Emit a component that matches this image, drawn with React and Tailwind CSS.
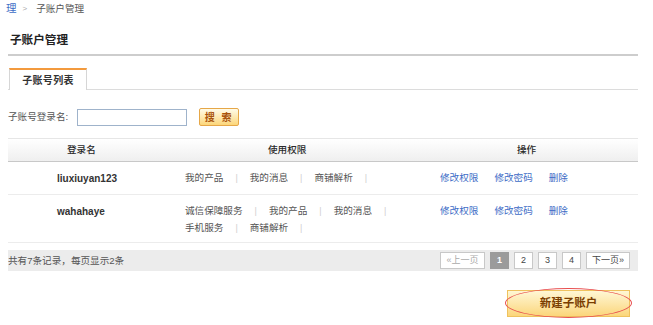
export default function App() {
  const Perm = ({ t }) => (
    <>
      <span>{t}</span>
      <span className="mx-[12px] text-[#cfcfcf] font-['Liberation_Sans'] text-[9px]">|</span>
    </>
  );
  const Actions = () => (
    <div className="flex gap-[16px] h-[17px] items-center text-[#3d6cc6]">
      <span>修改权限</span>
      <span>修改密码</span>
      <span>删除</span>
    </div>
  );
  const PageBox = ({ children, cls }) => (
    <div className={"h-[17px] border flex items-center justify-center text-[9px] " + cls}>{children}</div>
  );
  return (
    <div className="w-[653px] h-[325px] overflow-hidden bg-white text-[#444] font-['Liberation_Sans','Noto_Sans_CJK_SC',sans-serif]">
      <div className="pl-[8px] pr-[15px]">
        {/* breadcrumb */}
        <div className="h-[18px] flex items-center text-[9.6px] -ml-[2px]">
          <span className="text-[#3d6cc6] text-[10.5px]">理</span>
          <span className="ml-[6px] mr-[9px] text-[#aaa] text-[8px]">&gt;</span>
          <span className="text-[#555]">子账户管理</span>
        </div>
        {/* title */}
        <div className="h-[36px] pt-[12px] pl-[2px] leading-[20px] text-[11.6px] font-bold text-[#222]">子账户管理</div>
        <div className="h-[2px] bg-[#cdcdcd]"></div>
        {/* tab */}
        <div className="mt-[12px] flex border-b border-[#dcdcdc] h-[22px]">
          <div className="ml-[1px] w-[78px] h-[22px] border-t-2 border-t-[#f39a3d] border-x border-x-[#d6d6d6] bg-white flex items-center justify-center text-[10px] font-bold text-[#333] tracking-[0.3px]">
            子账号列表
          </div>
        </div>
        {/* search */}
        <div className="mt-[18px] h-[18px] flex items-center">
          <span className="text-[9.6px] text-[#555]">子账号登录名:</span>
          <div className="ml-[9px] w-[110px] h-[17px] border border-[#9fb3cb] bg-white"></div>
          <div className="ml-[12px] w-[40px] h-[18px] rounded-[2px] border border-[#e6a748] bg-gradient-to-b from-[#fffbe8] to-[#fcd678] flex items-center justify-center text-[10px] font-bold text-[#a9530c] tracking-[2px]">
            搜 索
          </div>
        </div>
        {/* table */}
        <div className="mt-[12px] text-[9.6px]">
          <div className="h-[24px] border-t border-t-[#e6e6e6] border-b border-b-[#c8c8c8] bg-gradient-to-b from-white to-[#efefef] grid grid-cols-[169px_239px_1fr] items-center text-[#2a2a2a] font-medium">
            <div className="pl-[59px]">登录名</div>
            <div className="pl-[91px]">使用权限</div>
            <div className="pl-[101px]">操作</div>
          </div>
          <div className="h-[33px] border-b border-[#ececec] grid grid-cols-[169px_239px_1fr] items-start pt-[8px]">
            <div className="pl-[49px] h-[17px] flex items-center text-[10px] font-bold text-[#333]">liuxiuyan123</div>
            <div className="pl-[8px] h-[17px] flex items-center text-[#555]">
              <Perm t="我的产品" />
              <Perm t="我的消息" />
              <Perm t="商铺解析" />
            </div>
            <div className="pl-[24px]"><Actions /></div>
          </div>
          <div className="h-[48px] border-b border-[#ececec] grid grid-cols-[169px_239px_1fr] items-start pt-[8px]">
            <div className="pl-[49px] h-[17px] flex items-center text-[10px] font-bold text-[#333]">wahahaye</div>
            <div className="pl-[8px] text-[#555]">
              <div className="h-[17px] flex items-center">
                <Perm t="诚信保障服务" />
                <Perm t="我的产品" />
                <Perm t="我的消息" />
              </div>
              <div className="h-[17px] flex items-center">
                <Perm t="手机服务" />
                <Perm t="商铺解析" />
              </div>
            </div>
            <div className="pl-[24px]"><Actions /></div>
          </div>
        </div>
        {/* footer */}
        <div className="mt-[7px] h-[21px] bg-[#ececec] flex items-center justify-between pr-[8px]">
          <span className="text-[9.6px] text-[#555] pt-[1px]">共有7条记录，每页显示2条</span>
          <div className="flex gap-[5px]">
            <PageBox cls="w-[45px] bg-white border-[#c8c8c8] text-[#aaa]">«上一页</PageBox>
            <PageBox cls="w-[19px] bg-[#9b9b9b] border-[#9b9b9b] text-white font-bold">1</PageBox>
            <PageBox cls="w-[19px] bg-white border-[#c8c8c8] text-[#444]">2</PageBox>
            <PageBox cls="w-[19px] bg-white border-[#c8c8c8] text-[#444]">3</PageBox>
            <PageBox cls="w-[19px] bg-white border-[#c8c8c8] text-[#444]">4</PageBox>
            <PageBox cls="w-[44px] bg-white border-[#c8c8c8] text-[#444]">下一页»</PageBox>
          </div>
        </div>
        {/* new button */}
        <div className="mt-[19px] flex justify-end pr-[8px]">
          <div className="relative w-[123px] h-[27px] border border-[#efc25e] bg-gradient-to-b from-[#fff7d4] to-[#fbd67a] flex items-center justify-center text-[11.5px] font-bold text-[#7a3d00]">
            新建子账户
            <div className="absolute -left-[3px] -right-[3px] -top-[3px] -bottom-[2px] rounded-[50%] border border-[#e84f4f]"></div>
          </div>
        </div>
      </div>
    </div>
  );
}
